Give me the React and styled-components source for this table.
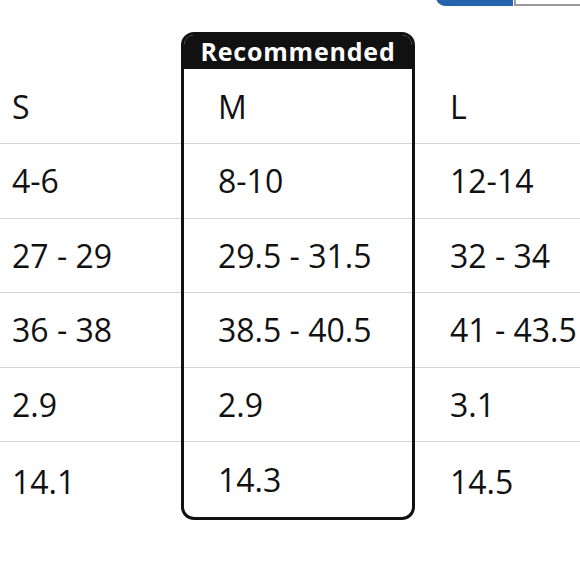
import React from "react";
import styled, { createGlobalStyle } from "styled-components";

const Global = createGlobalStyle`
  html, body { margin: 0; padding: 0; background: #fff; overflow: hidden; }
  body { font-family: "Open Sans", "Noto Sans", sans-serif; color: #111; }
`;

const Page = styled.div`
  width: 580px;
  height: 580px;
  overflow: hidden;
`;

const SegBar = styled.div`
  height: 6px;
  display: flex;
  justify-content: flex-end;
  align-items: flex-end;
  overflow: hidden;
  margin-right: -44px;
`;

const Seg = styled.div`
  flex: 0 0 auto;
  height: 40px;
  box-sizing: border-box;
  width: ${(p) => p.$w}px;
  background: ${(p) => (p.$active ? "#2564ad" : "#fff")};
  border: 2px solid ${(p) => (p.$active ? "#2564ad" : "#9a9a9a")};
  border-radius: ${(p) => (p.$active ? "0 0 0 9px" : "0 0 9px 0")};
  margin-left: ${(p) => (p.$active ? 0 : 1)}px;
`;

const Table = styled.div`
  display: grid;
  grid-template-columns: 181px 234px 1fr;
  margin-top: 26px;
  white-space: nowrap;
`;

const Col = styled.div`
  display: flex;
  flex-direction: column;
  padding-top: 37px;
`;

const RecBox = styled.div`
  display: flex;
  flex-direction: column;
  border: 3px solid #111;
  border-radius: 13px;
  overflow: hidden;
`;

const Band = styled.div`
  height: 34px;
  background: #111;
  color: #fff;
  font-weight: 700;
  font-size: 25px;
  letter-spacing: 0.8px;
  display: flex;
  align-items: center;
  justify-content: center;
  padding-bottom: 2px;
  box-sizing: border-box;
`;

const Cell = styled.div`
  height: ${(p) => p.$h}px;
  box-sizing: border-box;
  display: flex;
  align-items: center;
  padding-left: ${(p) => p.$pad}px;
  font-size: 32px;
  color: #111;
  border-bottom: ${(p) => (p.$last ? "none" : "1.5px solid #d4d4d4")};
`;

const heights = [75, 74.5, 74.5, 74.5, 74.5, 74];

const data = [
  ["S", "M", "L"],
  ["4-6", "8-10", "12-14"],
  ["27 - 29", "29.5 - 31.5", "32 - 34"],
  ["36 - 38", "38.5 - 40.5", "41 - 43.5"],
  ["2.9", "2.9", "3.1"],
  ["14.1", "14.3", "14.5"],
];

function Column({ idx, pad, lastH }) {
  return data.map((row, i) => (
    <Cell
      key={i}
      $pad={pad}
      $h={i === data.length - 1 ? lastH : heights[i]}
      $last={i === data.length - 1}
    >
      {row[idx]}
    </Cell>
  ));
}

export default function App() {
  return (
    <Page>
      <Global />
      <SegBar>
        <Seg $active $w={77} />
        <Seg $w={110} />
      </SegBar>
      <Table>
        <Col>
          <Column idx={0} pad={12} lastH={78} />
        </Col>
        <RecBox>
          <Band>Recommended</Band>
          <Column idx={1} pad={34} lastH={75} />
        </RecBox>
        <Col>
          <Column idx={2} pad={35} lastH={78} />
        </Col>
      </Table>
    </Page>
  );
}
